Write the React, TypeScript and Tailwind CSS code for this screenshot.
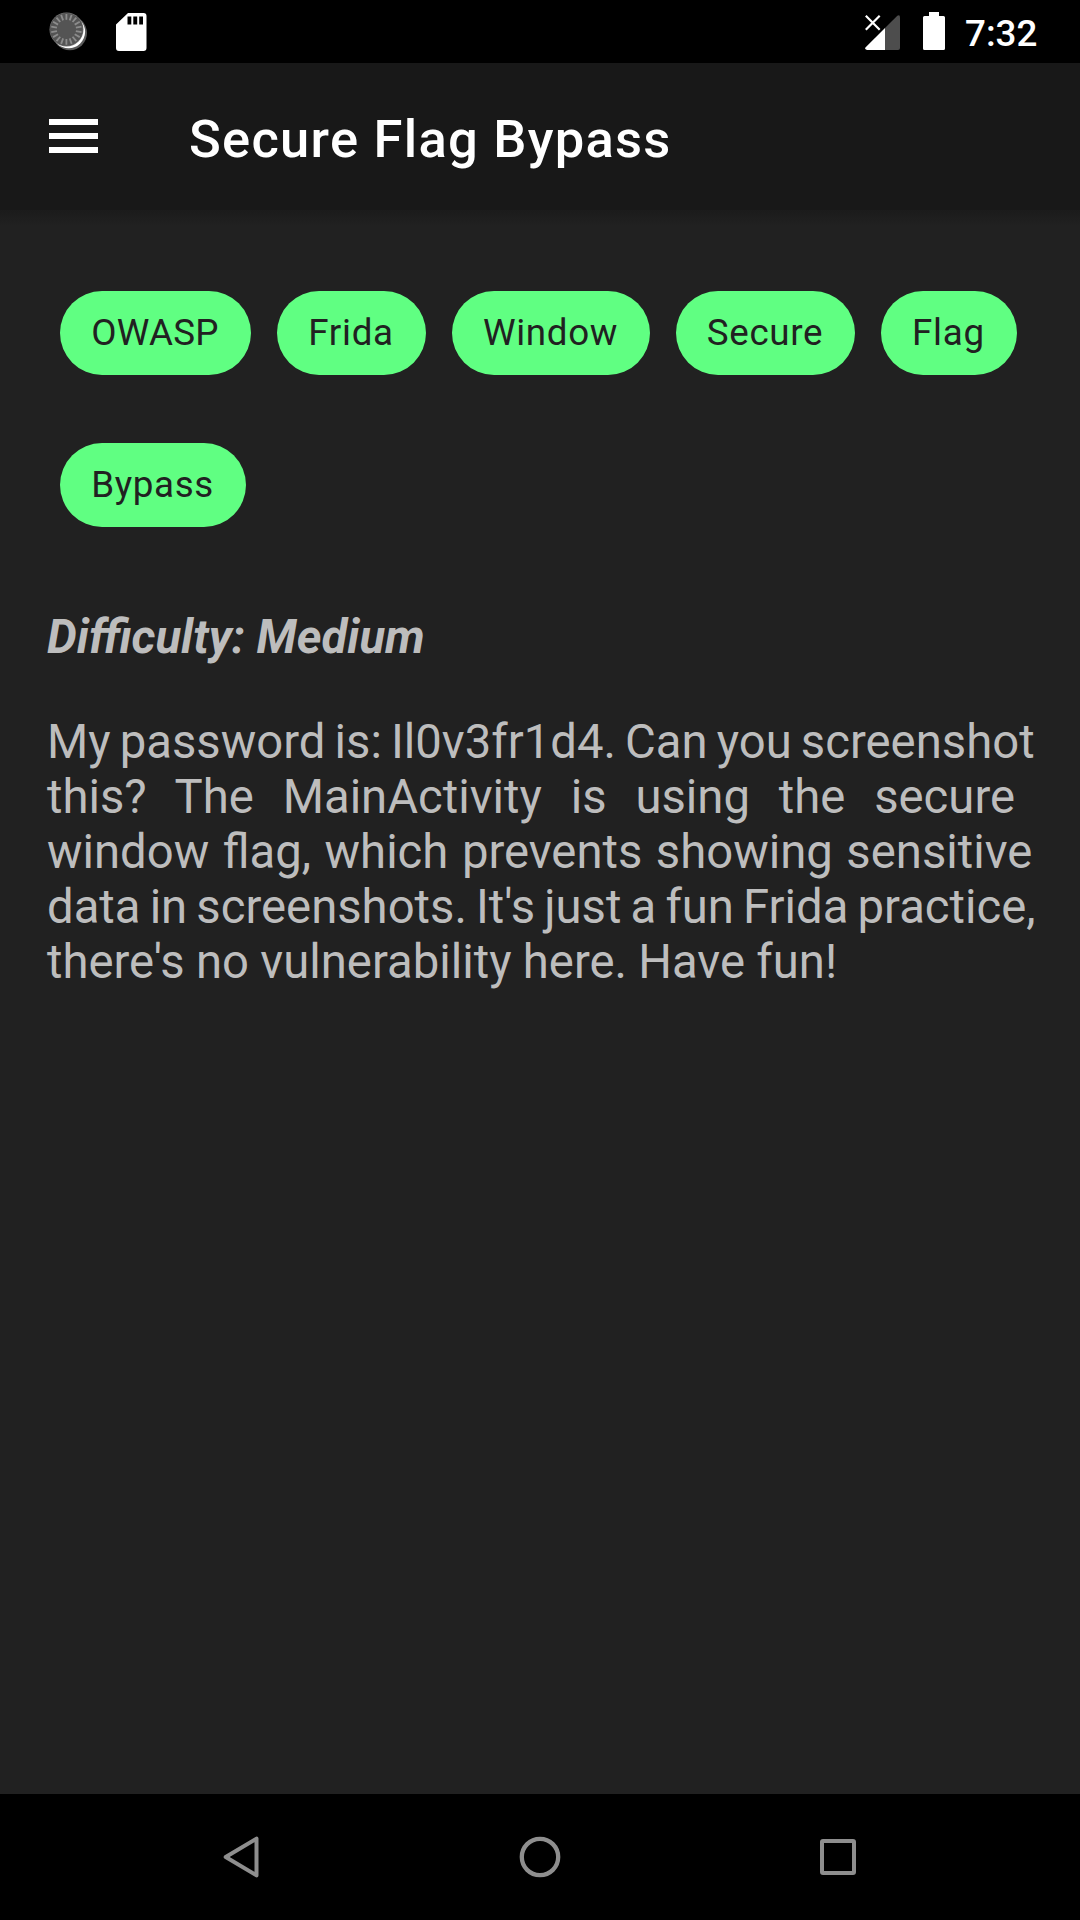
const TAGS = [
  { label: 'OWASP', box: 'w-[191px] tracking-[0.3px]' },
  { label: 'Frida', box: 'w-[149px] tracking-[0.75px]' },
  { label: 'Window', box: 'w-[198px] tracking-[0.65px]' },
  { label: 'Secure', box: 'w-[179px] tracking-[0.65px]' },
  { label: 'Flag', box: 'w-[136px] tracking-[0.75px]' },
  { label: 'Bypass', box: 'w-[186px] tracking-[0.65px]' },
];

const LINES = [
  { text: 'My password is: Il0v3fr1d4. Can you screenshot', spacing: '[word-spacing:-2.6px]' },
  { text: 'this? The MainActivity is using the secure', spacing: '[word-spacing:17.1px]' },
  { text: 'window flag, which prevents showing sensitive', spacing: '[word-spacing:1.8px]' },
  { text: "data in screenshots. It's just a fun Frida practice,", spacing: '[word-spacing:-2.6px]' },
  { text: "there's no vulnerability here. Have fun!", spacing: '[word-spacing:-0.4px]' },
];

const TICKS = Array.from({ length: 18 }, (_, i) => i * 20);

function SpinnerIcon() {
  return (
    <svg className="h-[42px] w-[42px]" viewBox="0 0 42 42">
      <circle cx="23.800" cy="24" r="17.200" fill="#5a5a5a" />
      <circle cx="22.600" cy="22.800" r="16.500" fill="#fff" />
      <circle cx="20.500" cy="20.500" r="17" fill="#777" />
      <circle cx="20.400" cy="20.400" r="16.400" fill="#545454" />
      {TICKS.map((a) => (
        <path key={a} d="M20.400 5v5.800" stroke="#8c8c8c" strokeWidth="1.800" transform={`rotate(${a} 20.4 20.4)`} />
      ))}
    </svg>
  );
}

function SdCardIcon() {
  return (
    <svg className="ml-[28px] h-[38px] w-[31px]" viewBox="0 0 31 38">
      <path
        fill="#fff"
        fillRule="evenodd"
        d="M12 0H27.500A3 3 0 0 1 30.500 3V35A3 3 0 0 1 27.500 38H3A3 3 0 0 1 0 35V11.500ZM11.500 3.500V11.500H15.300V3.500ZM17.300 3.500V11.500H21.200V3.500ZM23.200 3.500V11.500H27V3.500Z"
      />
    </svg>
  );
}

function SignalIcon() {
  return (
    <svg className="h-[35px] w-[35px]" viewBox="0 0 35 35">
      <path d="M20 13 32.300 .7Q35-1 35 2.500V33Q35 35 33 35H20Z" fill="#4d4d4d" />
      <path d="M20 13V35H2Q-1 34 .7 32.300Z" fill="#fff" />
      <path d="M.8.8 14.700 14.700M14.700.8.8 14.700" stroke="#fff" strokeWidth="2.200" />
    </svg>
  );
}

function BatteryIcon() {
  return (
    <svg className="ml-[23px] h-[38px] w-[22px]" viewBox="0 0 22 38">
      <path d="M6 0H16V4H20.500Q22 4 22 5.500V36.500Q22 38 20.500 38H1.500Q0 38 0 36.500V5.500Q0 4 1.500 4H6Z" fill="#fff" />
    </svg>
  );
}

export default function App() {
  return (
    <div className="flex h-[1920px] w-[1080px] flex-col overflow-hidden bg-[#212121] font-['Roboto',sans-serif]">
      <div className="flex h-[63px] shrink-0 justify-between bg-black pl-[46px] pr-[42px]">
        <div className="flex items-start">
          <div className="pt-[9px]"><SpinnerIcon /></div>
          <div className="pt-[12.5px]"><SdCardIcon /></div>
        </div>
        <div className="flex items-start">
          <div className="pt-[15px]"><SignalIcon /></div>
          <div className="pt-3"><BatteryIcon /></div>
          <span className="ml-[20px] w-[73px] pt-3 text-[36.75px] leading-[44px] font-medium whitespace-nowrap text-white">7:32</span>
        </div>
      </div>

      <header className="flex h-[147px] shrink-0 items-start bg-[#181818] pl-[48.5px]">
        <div className="flex w-[140.5px] flex-col gap-[8.5px] pt-14">
          <span className="h-[5.5px] w-[49.5px] bg-white" />
          <span className="h-[5.5px] w-[49.5px] bg-white" />
          <span className="h-[5.5px] w-[49.5px] bg-white" />
        </div>
        <h1 className="pt-[45px] text-[52.5px] leading-[62px] font-medium tracking-[1.26px] whitespace-nowrap text-white">
          Secure Flag Bypass
        </h1>
      </header>
      <div className="h-4 shrink-0 bg-gradient-to-b from-[#1b1b1b] to-[#212121]" />

      <main className="flex-1">
        <div className="flex flex-wrap gap-x-[26px] gap-y-[68px] pt-[65px] pl-[60px]">
          {TAGS.map((t) => (
            <span
              key={t.label}
              className={`flex h-[84px] justify-center rounded-full bg-[#60ff82] pt-5 pr-px text-[36.75px] leading-[44px] text-[#212121] ${t.box}`}
            >
              {t.label}
            </span>
          ))}
        </div>
        <div className="pt-[83px] pl-[47px] text-[47.25px] leading-[55px] text-[#bdbdbd]">
          <p className="mb-[50px] font-bold italic">Difficulty: Medium</p>
          {LINES.map((l) => (
            <p key={l.text} className={`whitespace-nowrap ${l.spacing}`}>{l.text}</p>
          ))}
        </div>
      </main>

      <nav className="flex h-[126px] shrink-0 items-center justify-between bg-black px-[221px]">
        <svg className="h-[42px] w-[42px]" viewBox="0 0 42 42" fill="none" stroke="#8e8e8e" strokeWidth="4" strokeLinejoin="round">
          <path d="M35.500 2.600V39.400L4.700 21Z" />
        </svg>
        <svg className="h-[42px] w-[42px]" viewBox="0 0 42 42" fill="none" stroke="#8e8e8e" strokeWidth="4.300">
          <circle cx="21" cy="21" r="18.200" />
        </svg>
        <svg className="h-[42px] w-[42px]" viewBox="0 0 42 42" fill="none" stroke="#8e8e8e" strokeWidth="4">
          <rect x="5" y="5" width="32" height="32" rx="1" />
        </svg>
      </nav>
    </div>
  );
}
